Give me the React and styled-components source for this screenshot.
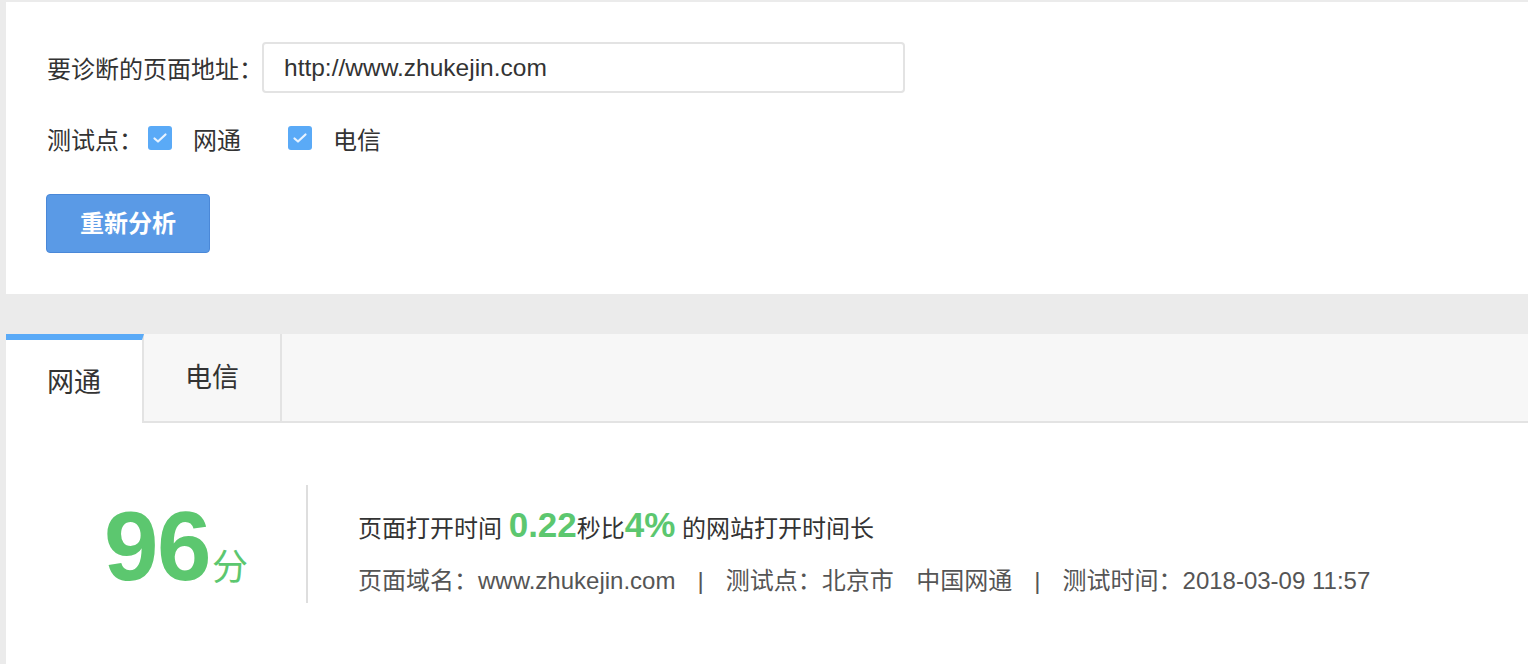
import React from 'react';
import styled, { createGlobalStyle, css } from 'styled-components';

const GlobalStyle = createGlobalStyle`
  html, body {
    margin: 0;
    padding: 0;
    background: #ebebeb;
  }
  body {
    font-family: "Liberation Sans", "Noto Sans CJK SC", sans-serif;
    color: #333;
  }
`;

const Page = styled.div`
  padding: 2px 0 0 6px;
  min-height: 664px;
  box-sizing: border-box;
`;

const Panel = styled.div`
  background: #fff;
`;

const Form = styled(Panel)`
  padding: 40px 40px 41px;
  margin-bottom: 40px;
`;

const Row = styled.div`
  display: flex;
  align-items: center;
  font-size: 24px;
  height: ${(p) => p.h || 44}px;
  margin-top: ${(p) => p.mt || 0}px;
`;

const Label = styled.span`
  width: ${(p) => p.w}px;
  padding-left: 1px;
  box-sizing: border-box;
  white-space: nowrap;
`;

const Input = styled.input`
  width: 643px;
  height: 51px;
  box-sizing: border-box;
  border: 2px solid #e3e3e3;
  border-radius: 4px;
  padding: 0 20px;
  font-family: "Liberation Sans", sans-serif;
  font-size: 24.5px;
  color: #333;
  outline: none;
`;

const Check = styled.label`
  display: flex;
  align-items: center;
  margin-right: 47px;
  cursor: pointer;
`;

const Box = styled.span`
  width: 24px;
  height: 24px;
  border-radius: 3px;
  background: #5aaaf7;
  display: flex;
  align-items: center;
  justify-content: center;
  margin-right: 21px;
`;

const Button = styled.button`
  display: block;
  margin-top: 34px;
  width: 164px;
  height: 59px;
  padding: 0 0 4px;
  background: #5a9ae6;
  border: 1px solid #4a88d8;
  border-radius: 4px;
  color: #fff;
  font-family: "Liberation Sans", "Noto Sans CJK SC", sans-serif;
  font-size: 24px;
  font-weight: 700;
  cursor: pointer;
`;

const TabBar = styled.div`
  display: flex;
  height: 87px;
  background: #f7f7f7;
  border-bottom: 2px solid #e3e3e3;
`;

const Tab = styled.div`
  width: 138px;
  border-right: 2px solid #e3e3e3;
  display: flex;
  align-items: center;
  justify-content: center;
  font-size: 27px;
  color: #333;
  padding-bottom: 4px;
  box-sizing: border-box;
  ${(p) =>
    p.active &&
    css`
      background: #fff;
      border-top: 6px solid #5aaaf7;
      height: 89px;
      margin-bottom: -2px;
      padding-bottom: 2px;
    `}
`;

const Result = styled.div`
  display: flex;
  align-items: flex-start;
  padding: 62px 0 61px;
`;

const Score = styled.div`
  width: 300px;
  padding: 12px 0 0 98px;
  box-sizing: border-box;
  color: #5cc76f;
  white-space: nowrap;
`;

const Big = styled.span`
  font-size: 98px;
  font-weight: 700;
  line-height: 1;
  letter-spacing: -1.5px;
`;

const Unit = styled.span`
  font-size: 36px;
  margin-left: 2px;
`;

const Divider = styled.div`
  width: 2px;
  height: 118px;
  background: #dedede;
`;

const Info = styled.div`
  padding: 20px 0 0 50px;
  font-size: 24px;
`;

const Line = styled.div`
  line-height: 40px;
  color: ${(p) => p.color || '#333'};
  margin-top: ${(p) => p.mt || 0}px;
  white-space: nowrap;
`;

const Num = styled.span`
  color: #5cc76f;
  font-size: 35px;
  font-weight: 700;
`;

const Sep = styled.span`
  margin: 0 ${(p) => p.gap || 22}px;
`;

const Tick = () => (
  <svg width="16" height="12" viewBox="0 0 16 12">
    <path d="M2.5 6.5 L6 9.5 L13.5 2.5" fill="none" stroke="#e8f3ff" strokeWidth="2.2" strokeLinecap="round" strokeLinejoin="round" />
  </svg>
);

export default function App() {
  return (
    <>
      <GlobalStyle />
      <Page>
        <Form>
          <Row h={51}>
            <Label w={216}>要诊断的页面地址：</Label>
            <Input defaultValue="http://www.zhukejin.com" />
          </Row>
          <Row mt={23}>
            <Label w={102}>测试点：</Label>
            <Check>
              <Box><Tick /></Box>
              网通
            </Check>
            <Check>
              <Box><Tick /></Box>
              电信
            </Check>
          </Row>
          <Button>重新分析</Button>
        </Form>
        <Panel>
          <TabBar>
            <Tab active>网通</Tab>
            <Tab>电信</Tab>
          </TabBar>
          <Result>
            <Score>
              <Big>96</Big>
              <Unit>分</Unit>
            </Score>
            <Divider />
            <Info>
              <Line>
                页面打开时间 <Num>0.22</Num>秒比<Num>4%</Num> 的网站打开时间长
              </Line>
              <Line color="#555" mt={12}>
                页面域名：www.zhukejin.com<Sep>|</Sep>测试点：北京市<Sep gap={8}>&nbsp;</Sep>中国网通<Sep>|</Sep>测试时间：2018-03-09 11:57
              </Line>
            </Info>
          </Result>
        </Panel>
      </Page>
    </>
  );
}
